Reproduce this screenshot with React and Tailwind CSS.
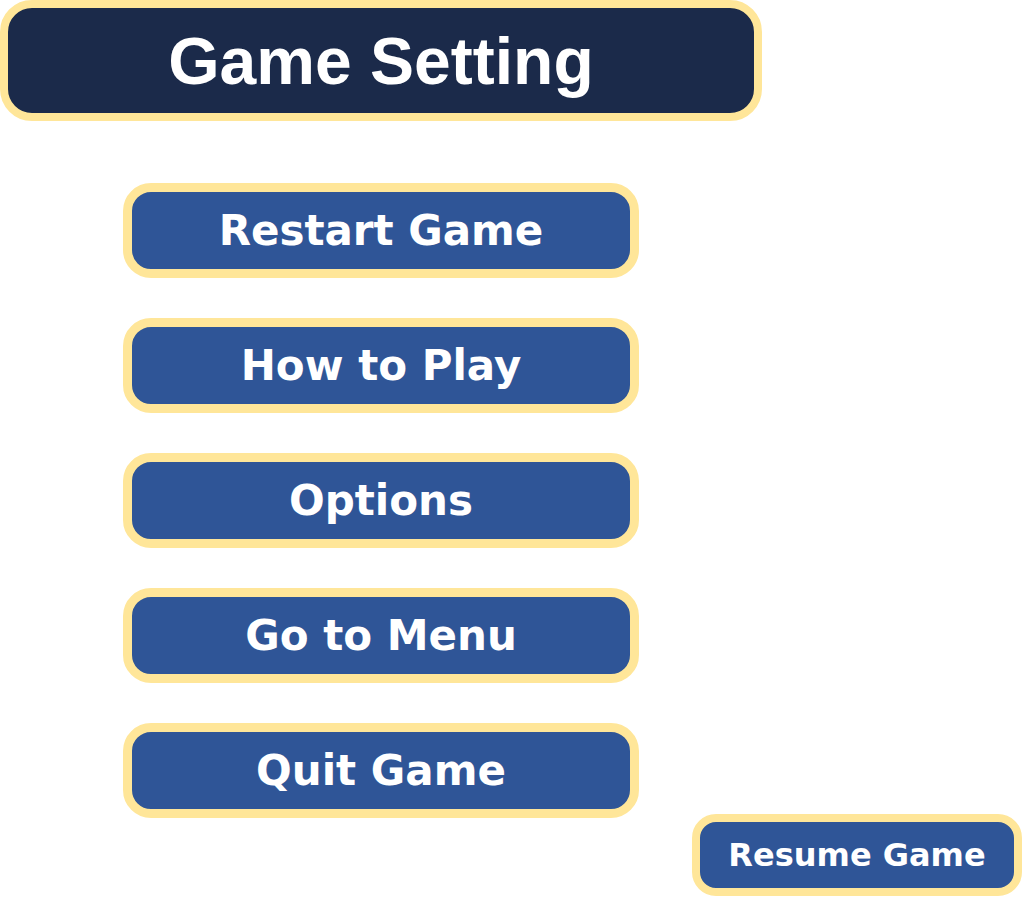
import React from 'react';

const menuItems = ['Restart Game', 'How to Play', 'Options', 'Go to Menu', 'Quit Game'];

const btnFont = { fontFamily: '"DejaVu Sans", Verdana, sans-serif' };

const App = () => {
  return (
    <div className="w-[1024px] h-[900px] bg-white overflow-hidden">
      <div className="w-[762px] h-[121px] rounded-[32px] border-[8px] border-[#ffe699] bg-[#1b2a4a] flex items-center justify-center">
        <h1 className="text-[66px] font-bold text-white leading-none font-['Liberation_Sans',Arial,sans-serif]">
          Game Setting
        </h1>
      </div>

      <div className="ml-[123px] mt-[62px] w-[516px] flex flex-col gap-[40px]">
        {menuItems.map((label) => (
          <button
            key={label}
            className="h-[95px] w-full rounded-[28px] border-[9px] border-[#ffe699] bg-[#2f5597] flex items-center justify-center text-white font-bold text-[42px] leading-none"
            style={btnFont}
          >
            {label}
          </button>
        ))}
      </div>

      <div className="flex justify-end pr-[2px] -mt-[4px]">
        <button
          className="w-[330px] h-[82px] rounded-[24px] border-[8px] border-[#ffe699] bg-[#2f5597] flex items-center justify-center text-white font-bold text-[32px] leading-none"
          style={btnFont}
        >
          Resume Game
        </button>
      </div>
    </div>
  );
};

export default App;
